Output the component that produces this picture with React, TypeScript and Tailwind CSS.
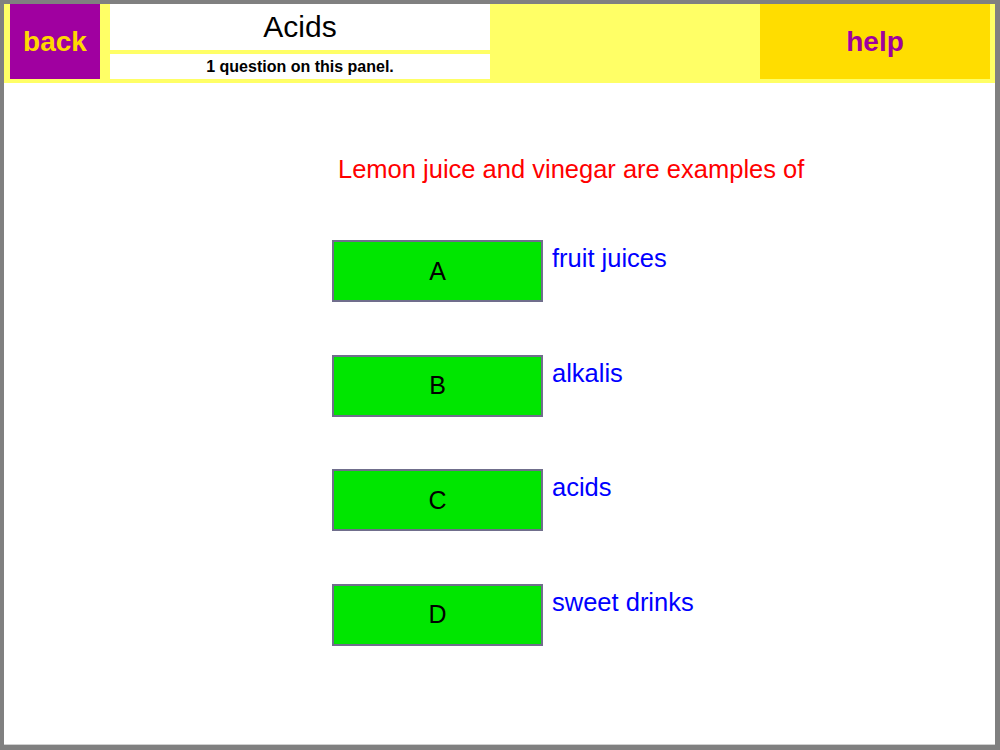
import React from "react";

const options = [
  { letter: "A", text: "fruit juices" },
  { letter: "B", text: "alkalis" },
  { letter: "C", text: "acids" },
  { letter: "D", text: "sweet drinks" },
];

export default function App() {
  return (
    <div
      className="w-[1000px] h-[750px] bg-[#808080] pt-[4px] pl-[4px] pr-[5px] pb-[5px]"
      style={{ fontFamily: '"Liberation Sans", Arial, sans-serif' }}
    >
      <div className="w-full h-full bg-white flex flex-col border-b border-[#d0d0d0]">
        {/* header */}
        <div className="h-[79px] bg-[#ffff66] flex pl-[6px] pr-[5px]">
          <div className="w-[90px] h-[75px] bg-[#a000a0] flex items-center justify-center">
            <span className="text-[#ffd700] font-bold text-[28px] leading-none">back</span>
          </div>
          <div className="w-[380px] ml-[10px] flex flex-col gap-[4px]">
            <div className="h-[46px] bg-white flex items-center justify-center">
              <span className="text-black text-[30px] leading-none">Acids</span>
            </div>
            <div className="h-[25px] bg-white flex items-center justify-center">
              <span className="text-black font-bold text-[16px] leading-none">1 question on this panel.</span>
            </div>
          </div>
          <div className="flex-1" />
          <div className="w-[230px] h-[75px] bg-[#ffdd00] flex items-center justify-center">
            <span className="text-[#a000a0] font-bold text-[28px] leading-none">help</span>
          </div>
        </div>

        {/* body */}
        <div className="pt-[72px] pl-[334px]">
          <div className="text-[#ff0000] text-[25.5px] leading-[28px]">
            Lemon juice and vinegar are examples of
          </div>
        </div>
        <div className="mt-[57px] pl-[328px] flex flex-col gap-[52.5px]">
          {options.map((o) => (
            <div key={o.letter} className="flex items-start">
              <div className="w-[211px] h-[62px] bg-[#00e600] border-2 border-[#706e8c] flex items-center justify-center">
                <span className="text-black text-[25px] leading-none">{o.letter}</span>
              </div>
              <span className="ml-[9px] mt-[4px] text-[#0000ff] text-[25.5px] leading-[28px]">{o.text}</span>
            </div>
          ))}
        </div>
      </div>
    </div>
  );
}
